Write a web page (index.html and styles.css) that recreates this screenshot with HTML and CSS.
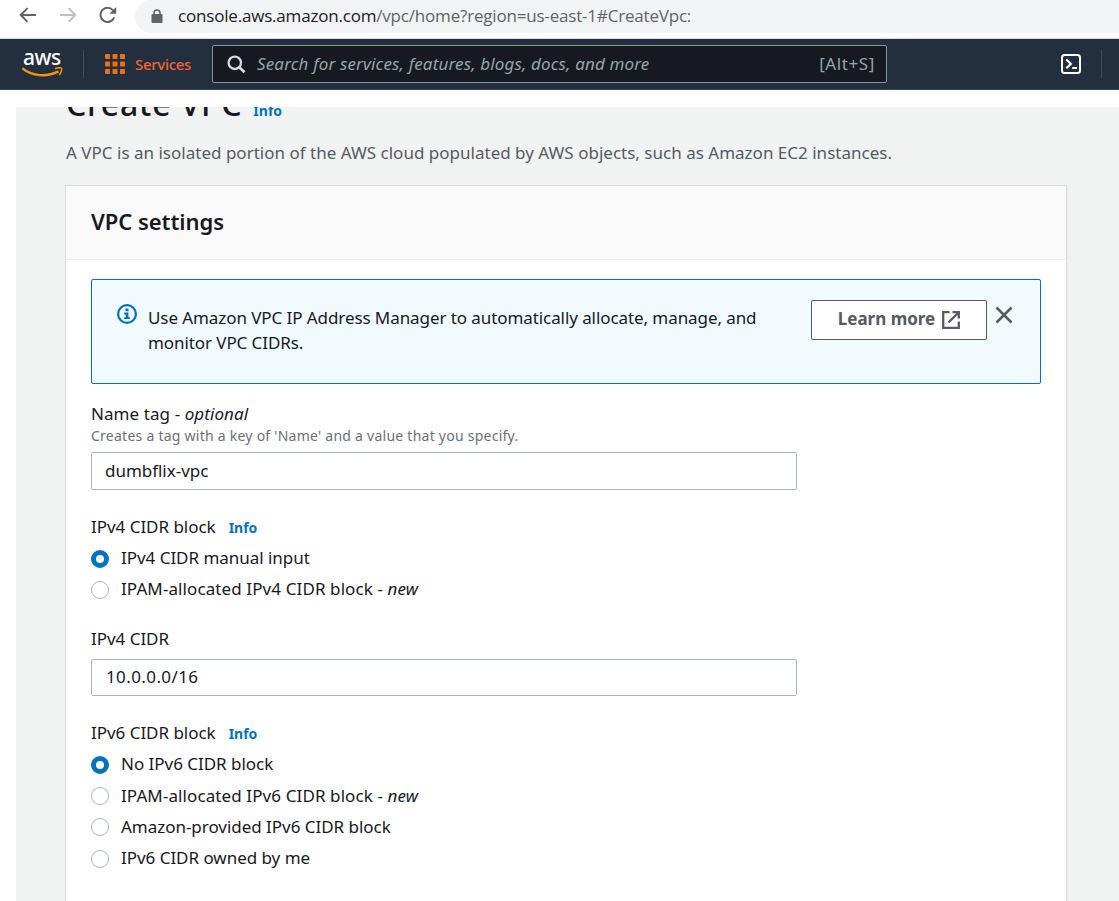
FILE: index.html
```html
<!DOCTYPE html>
<html lang="en">
<head>
<meta charset="utf-8">
<title>Create VPC</title>
<link rel="stylesheet" href="styles.css">
</head>
<body>
<div class="browser">
  <svg class="bicon back" width="18" height="16" viewBox="0 0 18 16"><path d="M17 8H2M8.5 1.2L1.7 8l6.8 6.8" fill="none" stroke="#5f6368" stroke-width="1.9"/></svg>
  <svg class="bicon fwd" width="18" height="16" viewBox="0 0 18 16"><path d="M1 8h15M9.5 1.2L16.3 8l-6.8 6.8" fill="none" stroke="#bdbfc2" stroke-width="1.9"/></svg>
  <svg class="bicon reload" width="18" height="18" viewBox="0 0 18 18"><path d="M15.3 11.2A7.1 7.1 0 1 1 14 4.3" fill="none" stroke="#5f6368" stroke-width="2"/><path d="M17.2 1v6.8h-6.8z" fill="#5f6368"/></svg>
  <div class="omnibox">
    <svg width="12" height="15" viewBox="0 0 12 15"><rect x=".5" y="5" width="11" height="9" rx="1" fill="#5f6368"/><path d="M3 6V4a3 3 0 0 1 6 0v2" fill="none" stroke="#5f6368" stroke-width="1.5"/></svg>
    <span class="url"><span class="host">console.aws.amazon.com</span>/vpc/home?region=us-east-1#CreateVpc:</span>
  </div>
</div>
<header class="nav">
  <div class="logo">
    <span class="logo-text">aws</span>
    <svg class="smile" width="42" height="12" viewBox="0 0 42 12"><path d="M.3 1.200C10 9.600 25 10.200 36.500 4.400" fill="none" stroke="#f79400" stroke-width="2.300"/><path d="M33 1.700c3-1.200 6-1.100 6.500-.4.500.9-.3 4.600-2.300 6.600" fill="none" stroke="#f79400" stroke-width="1.500"/></svg>
  </div>
  <i class="divider"></i>
  <svg class="grid" width="20" height="20" viewBox="0 0 20 20" fill="#ec7211"><rect width="5" height="5" rx=".8"/><rect x="7.500" width="5" height="5" rx=".8"/><rect x="15" width="5" height="5" rx=".8"/><rect y="7.500" width="5" height="5" rx=".8"/><rect x="7.500" y="7.500" width="5" height="5" rx=".8"/><rect x="15" y="7.500" width="5" height="5" rx=".8"/><rect y="15" width="5" height="5" rx=".8"/><rect x="7.500" y="15" width="5" height="5" rx=".8"/><rect x="15" y="15" width="5" height="5" rx=".8"/></svg>
  <span class="services">Services</span>
  <div class="search">
    <svg width="19" height="19" viewBox="0 0 19 19" fill="none" stroke="#d5dbdb" stroke-width="2.300"><circle cx="7.800" cy="7.800" r="6.200"/><path d="M12.300 12.300l5.200 5" stroke-width="2.700"/></svg>
    <span class="placeholder">Search for services, features, blogs, docs, and more</span>
    <span class="shortcut">[Alt+S]</span>
  </div>
  <svg class="shell" width="20" height="20" viewBox="0 0 20 20" fill="none" stroke="#fff"><rect x="1" y="1" width="18" height="18" rx="2.500" stroke-width="2"/><path d="M5.300 5.500l4.600 4.400-4.600 4.400M11.200 14h4.800" stroke-width="2.200"/></svg>
  <i class="divider end"></i>
</header>
<main class="page">
  <div class="title"><h1>Create VPC</h1><a class="info">Info</a></div>
  <p class="intro">A VPC is an isolated portion of the AWS cloud populated by AWS objects, such as Amazon EC2 instances.</p>
  <section class="card">
    <h2>VPC settings</h2>
    <div class="content">
      <div class="alert">
        <svg class="alert-icon" width="20" height="20" viewBox="0 0 20 20"><circle cx="10" cy="10" r="8.900" fill="none" stroke="#0073bb" stroke-width="2.200"/><path d="M8.500 4.500h3v2.700h-3zM7.200 8.500h4.200v4.700h1.500v1.900H7.100v-1.900h1.600v-2.800H7.200z" fill="#0073bb"/></svg>
        <p>Use Amazon VPC IP Address Manager to automatically allocate, manage, and<br>monitor VPC CIDRs.</p>
        <button class="learn"><span>Learn more</span><svg width="18" height="18" viewBox="0 0 18 18" fill="none" stroke="#545b64" stroke-width="2.300"><path d="M7.500 1.200H1.200v15.600h15.600v-6.300M10.500 1.200h6.300v6.300M16.500 1.500L6.500 11.500"/></svg></button>
        <svg class="close" width="18" height="18" viewBox="0 0 18 18"><path d="M1.500 1.500l15 15M16.500 1.500l-15 15" stroke="#545b64" stroke-width="2.500"/></svg>
      </div>
      <label class="label name"><span>Name tag - <em>optional</em></span></label>
      <p class="hint">Creates a tag with a key of 'Name' and a value that you specify.</p>
      <div class="input"><span>dumbflix-vpc</span></div>
      <div class="label block"><span>IPv4 CIDR block</span><a class="info">Info</a></div>
      <div class="radios">
        <div class="option"><i class="radio on"></i><span>IPv4 CIDR manual input</span></div>
        <div class="option"><i class="radio"></i><span class="ipam">IPAM-allocated IPv4 CIDR block - <em>new</em></span></div>
      </div>
      <label class="label cidr"><span>IPv4 CIDR</span></label>
      <div class="input short"><span class="ip">10.0.0.0/16</span></div>
      <div class="label block"><span>IPv6 CIDR block</span><a class="info">Info</a></div>
      <div class="radios">
        <div class="option"><i class="radio on"></i><span>No IPv6 CIDR block</span></div>
        <div class="option"><i class="radio"></i><span class="ipam">IPAM-allocated IPv6 CIDR block - <em>new</em></span></div>
        <div class="option"><i class="radio"></i><span>Amazon-provided IPv6 CIDR block</span></div>
        <div class="option"><i class="radio"></i><span>IPv6 CIDR owned by me</span></div>
      </div>
    </div>
  </section>
</main>
</body>
</html>
```
FILE: styles.css
```css
* { box-sizing: border-box; }
body { margin: 0; height: 901px; overflow: hidden; background: #fff; color: #16191f; font: 17px/25px "Noto Sans", "Open Sans", sans-serif; letter-spacing: -0.03px; white-space: nowrap; }
h1, h2, p { margin: 0; }
svg { display: block; flex: none; }

.browser { display: flex; height: 39px; border-bottom: 1px solid #d5d9dc; }
.back { margin: 7px 0 0 19px; }
.fwd { margin: 7px 0 0 22px; }
.reload { margin: 6px 0 0 22px; }
.omnibox { display: flex; flex: 1; height: 33px; margin-left: 18px; padding: 0 0 1px 16px; align-items: center; gap: 15px; border-radius: 18px 0 0 18px; background: #f1f3f4; }
.url { padding-bottom: 2px; font-family: "Open Sans", sans-serif; font-size: 17px; letter-spacing: -0.19px; color: #5f6368; }
.host { color: #202124; }

.nav { display: flex; height: 51px; align-items: center; background: #232f3e; border-bottom: 1px solid #414750; }
.logo { display: flex; flex-direction: column; flex: none; width: 42px; margin-left: 22px; padding-bottom: 2px; }
.logo-text { height: 19px; padding-left: 1px; font: 500 21px/19px "Noto Sans", sans-serif; letter-spacing: -0.5px; color: #fff; }
.smile { margin-top: 0; }
.divider { flex: none; width: 1px; height: 28px; margin-left: 19px; background: #414d5c; }
.grid { margin-left: 21px; }
.services { flex: none; width: 87px; padding-left: 10px; font-size: 15px; font-weight: 500; letter-spacing: -0.3px; color: #f2652a; }
.search { display: flex; flex: none; width: 675px; height: 38px; align-items: center; padding: 0 11px 0 14px; border: 1px solid #879596; border-radius: 2px; background: #161920; color: #95a5a6; }
.placeholder { margin-left: 11px; padding-bottom: 2px; font-style: italic; letter-spacing: 0.15px; }
.shortcut { margin-left: auto; padding-bottom: 2px; letter-spacing: 0.6px; }
.shell { margin-left: 174px; }
.end { margin-left: 20px; }

.page { height: 794px; margin: 17px 0 0 16px; padding-left: 50px; overflow: hidden; background: #f1f3f3; }
.title { display: flex; height: 33px; align-items: baseline; gap: 11px; margin-top: -23px; }
h1 { font-size: 32px; line-height: 40px; font-weight: 500; letter-spacing: 0.8px; }
.info { font-size: 14px; font-weight: 700; letter-spacing: 0; color: #0073bb; }
.intro { margin-top: 23px; letter-spacing: 0.01px; color: #545b64; }
.card { width: 1000px; height: 730px; margin-top: 21px; background: #fff; box-shadow: 0 0 0 1px #d9dddd, 1px 1px 1px #b8bfbf; }
h2 { height: 74px; padding: 0 25px; border-bottom: 1px solid #eaeded; background: #fafafa; font-size: 22px; line-height: 71px; font-weight: 600; letter-spacing: -0.05px; }
.content { padding: 19px 25px 0; }
.alert { display: flex; height: 105px; align-items: flex-start; border: 1px solid #0073bb; border-radius: 2px; background: #f1faff; }
.alert-icon { margin: 24px 0 0 25px; }
.alert p { flex: none; width: 674px; padding: 25px 0 0 11px; letter-spacing: -0.08px; }
.learn { display: flex; flex: none; width: 176px; height: 40px; margin-top: 20px; padding: 0; align-items: center; justify-content: center; gap: 7px; border: 1px solid #545b64; border-radius: 2px; background: #fff; color: #545b64; font: 700 17px/24px "Noto Sans", sans-serif; letter-spacing: 0; }
.learn span { padding-bottom: 2px; }
.close { margin: 26px 0 0 8px; }

.label { display: flex; height: 25px; align-items: baseline; }
.label .info { margin-left: 13px; }
.name { height: 23px; margin-top: 18px; line-height: 23px; letter-spacing: 0.08px; }
.hint { height: 21px; font-size: 14px; line-height: 21px; letter-spacing: 0.25px; color: #687078; }
.input { display: flex; width: 706px; height: 38px; margin-top: 6px; padding: 0 13px 2px; align-items: center; border: 1px solid #aab7b8; border-radius: 2px; }
.short { height: 37px; margin-top: 8px; padding-left: 14px; }
.ip { letter-spacing: 0.4px; }
.block { margin-top: 24px; }
.cidr { margin-top: 21px; }
.radios { display: grid; margin-top: 4px; grid-auto-rows: 31.200px; }
.option { display: flex; align-items: center; gap: 12px; }
.option span { padding-bottom: 2px; }
.option .ipam { letter-spacing: 0.1px; }
.radio { width: 18px; height: 18px; border: 1px solid #aab7b8; border-radius: 50%; background: #fff; }
.on { border: 5.500px solid #0073bb; }
```
